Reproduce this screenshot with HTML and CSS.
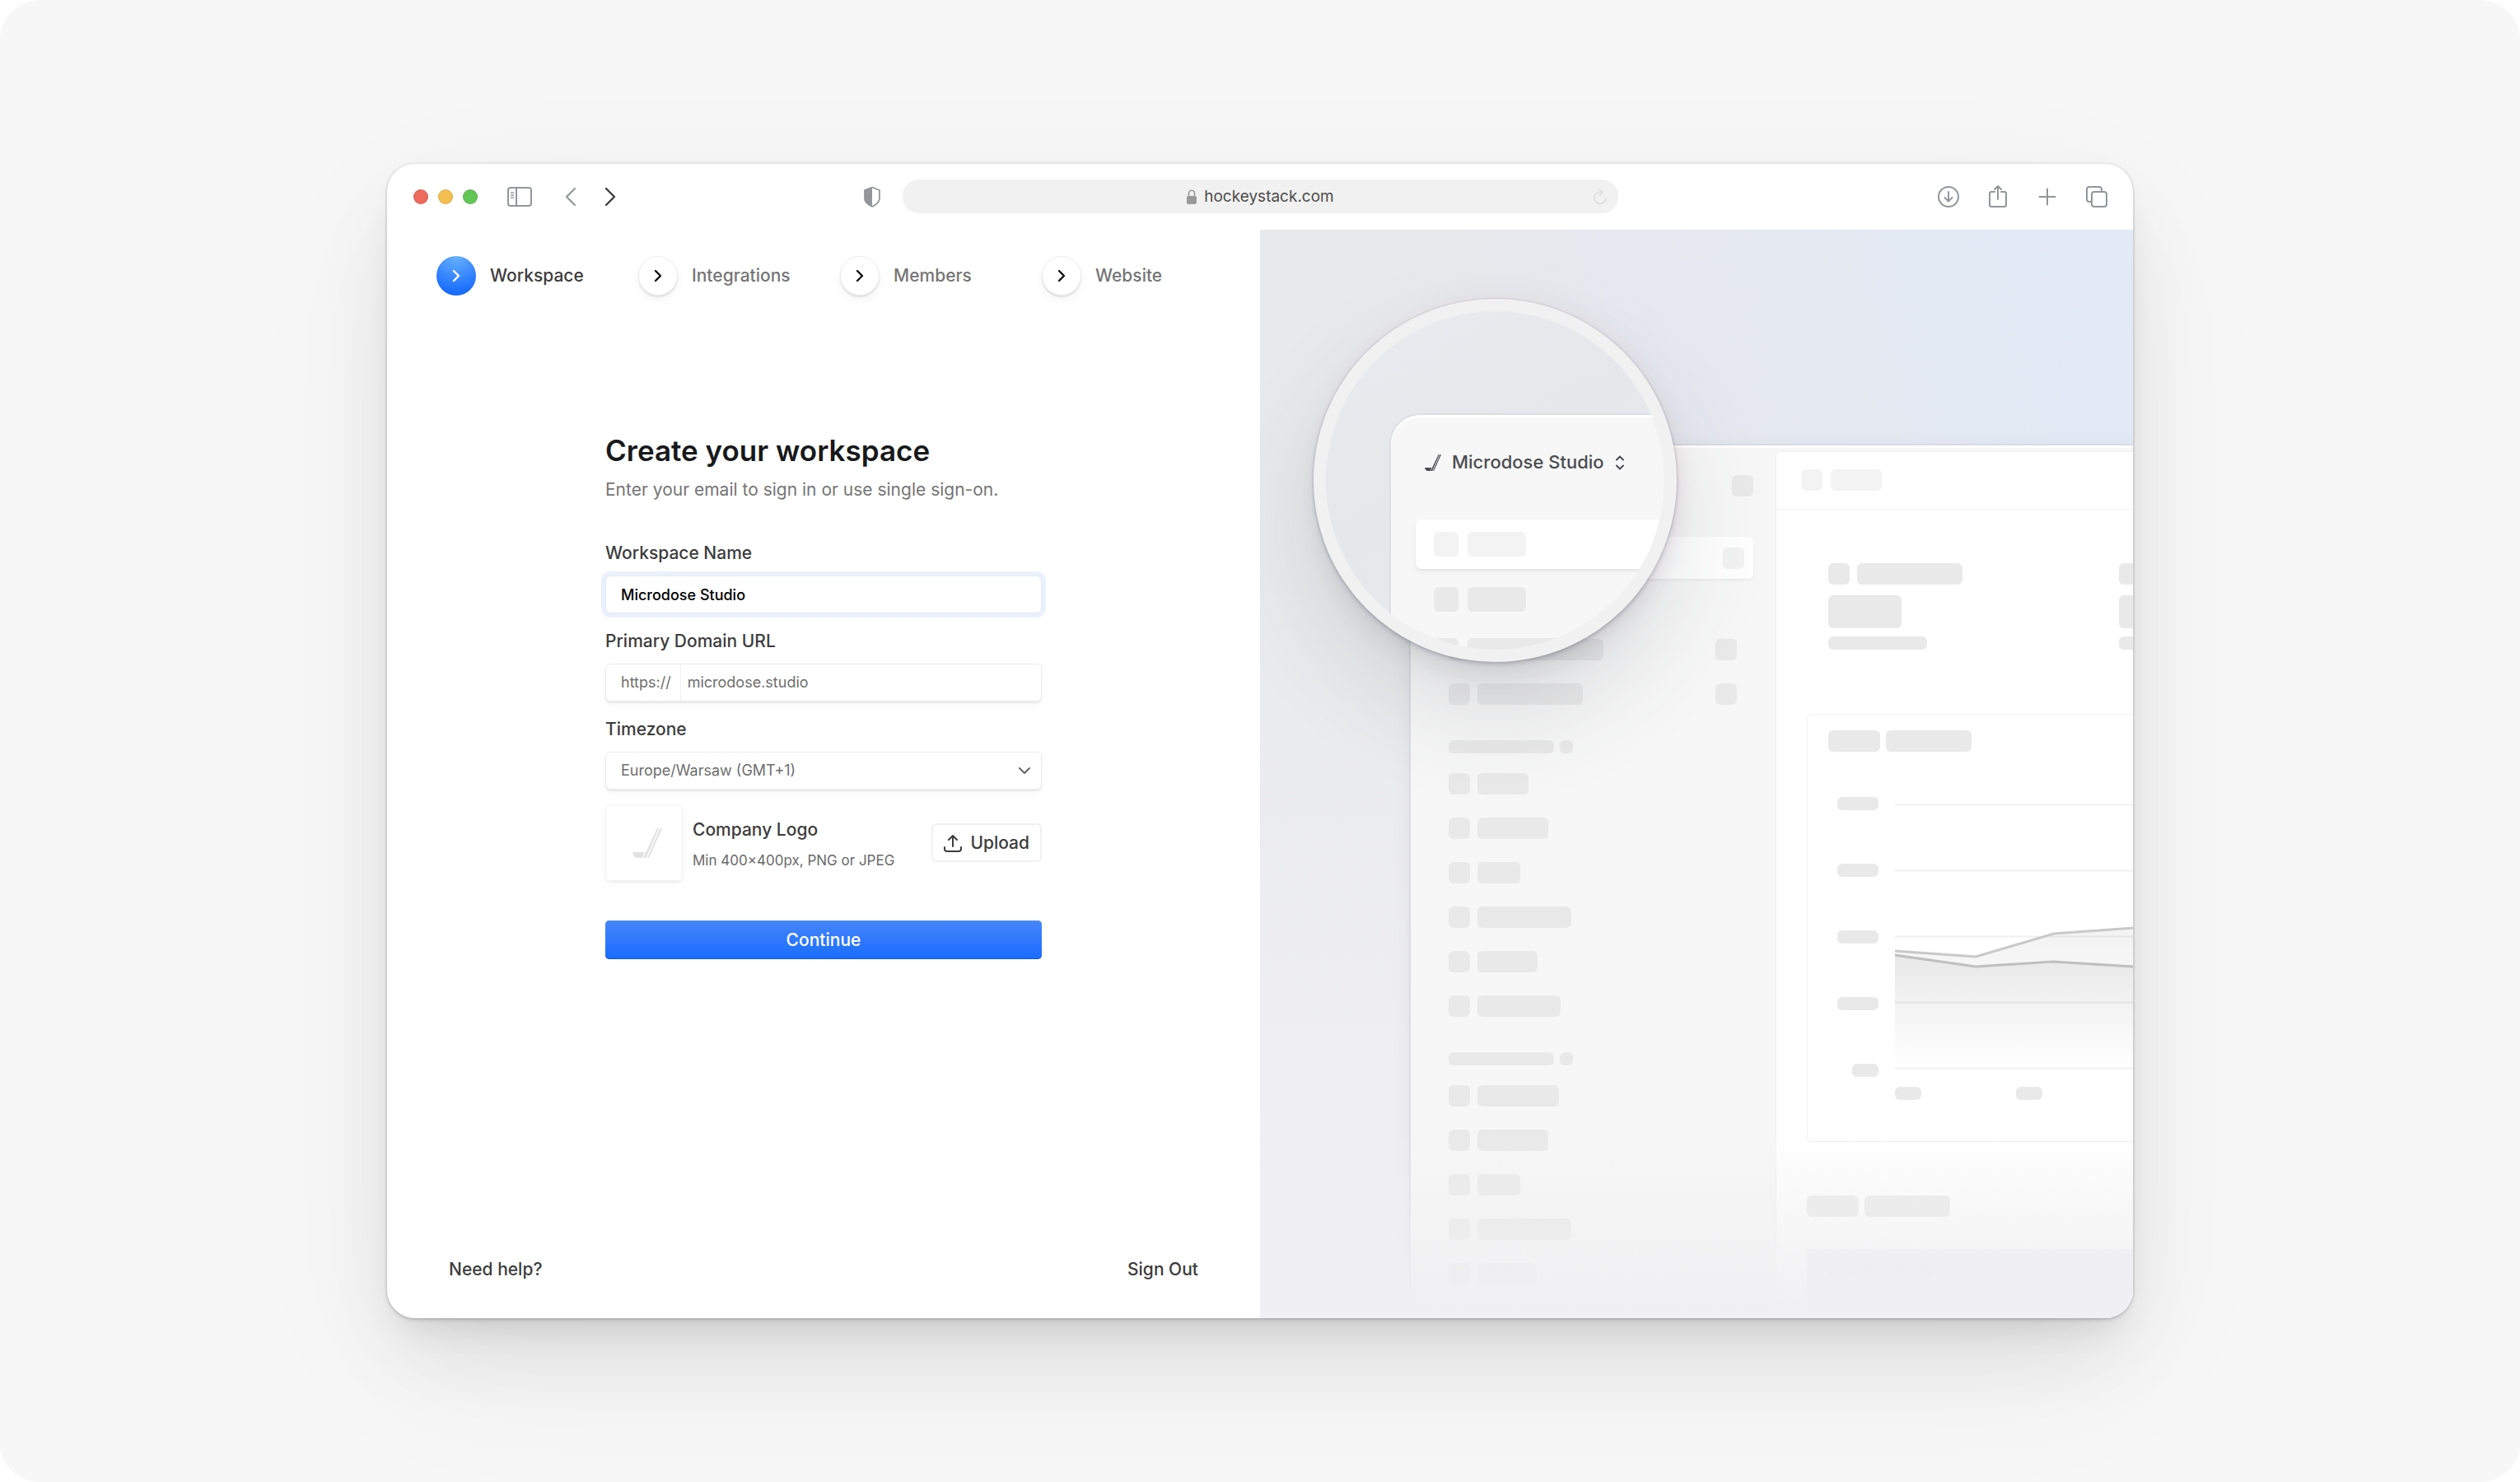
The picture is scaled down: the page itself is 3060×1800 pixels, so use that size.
FILE: index.html
```html
<!DOCTYPE html>
<html lang="en">
<head>
    <meta charset="UTF-8">
    <meta name="viewport" content="width=device-width, initial-scale=1.0">
    <title>Create your workspace</title>
    <link rel="stylesheet" href="styles.css">
</head>
<body>
<svg class="defs" width="0" height="0" aria-hidden="true">
    <symbol id="chevron" viewBox="0 0 10 16"><path d="M2 2l6 6-6 6" fill="none" stroke="currentColor" stroke-width="2.4" stroke-linecap="round" stroke-linejoin="round"/></symbol>
    <symbol id="logo" viewBox="0 0 36 36"><path d="M0 29h15l-3 7H6C3 36 1 33 0 29zM30 0h2L16.500 36H13zM33.500 0H36L20 36H18z" fill="currentColor"/></symbol>
</svg>

<div class="page">
<div class="window">

    <header class="toolbar">
        <div class="toolbar-left">
            <div class="lights">
                <span class="light red"></span>
                <span class="light yellow"></span>
                <span class="light green"></span>
            </div>
            <button class="tool tool-sidebar" aria-label="Sidebar">
                <svg width="30" height="24" viewBox="0 0 30 24" fill="none" stroke="currentColor" stroke-width="2"><rect x="1" y="1" width="28" height="22" rx="3"/><path d="M11 1v22"/><path d="M4 7h4M4 10h4M4 13h4" stroke-width="1.4"/></svg>
            </button>
            <button class="tool" aria-label="Back">
                <svg width="14" height="24" viewBox="0 0 14 24" fill="none" stroke="currentColor" stroke-width="2.2" stroke-linecap="round" stroke-linejoin="round"><path d="M12 2L2 12l10 10"/></svg>
            </button>
            <button class="tool tool-forward" aria-label="Forward">
                <svg width="14" height="24" viewBox="0 0 14 24" fill="none" stroke="currentColor" stroke-width="2.4" stroke-linecap="round" stroke-linejoin="round"><path d="M2 2l10 10L2 22"/></svg>
            </button>
        </div>

        <div class="address">
            <button class="tool tool-shield" aria-label="Privacy">
                <svg width="22" height="26" viewBox="0 0 22 26"><path d="M11 1.500L20 5v10c0 4.500-4 7.500-9 10-5-2.500-9-5.500-9-10V5z" fill="none" stroke="currentColor" stroke-width="1.800" stroke-linejoin="round"/><path d="M11 1.500V25c-5-2.500-9-5.500-9-10V5z" fill="currentColor"/></svg>
            </button>
            <div class="url-bar">
                <svg class="lock" width="14" height="18" viewBox="0 0 14 18"><rect x="1" y="8" width="12" height="10" rx="2" fill="currentColor"/><path d="M3.500 8V5a3.500 3.800 0 0 1 7 0v3" fill="none" stroke="currentColor" stroke-width="1.600"/></svg>
                <span>hockeystack.com</span>
                <svg class="reload" width="16" height="20" viewBox="0 0 16 20" fill="none" stroke="currentColor" stroke-width="1.600" stroke-linecap="round" stroke-linejoin="round"><path d="M9 4.500A7 7 0 1 0 15 11.500M7 1l4 3.600L7.500 8"/></svg>
            </div>
        </div>

        <div class="toolbar-right">
            <button class="tool" aria-label="Downloads">
                <svg width="28" height="28" viewBox="0 0 28 28" fill="none" stroke="currentColor" stroke-width="2" stroke-linecap="round" stroke-linejoin="round"><circle cx="14" cy="14" r="12"/><path d="M14 8v11M9.500 15l4.500 4.500 4.500-4.500"/></svg>
            </button>
            <button class="tool" aria-label="Share">
                <svg width="28" height="28" viewBox="0 0 28 28" fill="none" stroke="currentColor" stroke-width="2" stroke-linecap="round" stroke-linejoin="round"><path d="M10 8H6a2 2 0 0 0-2 2v14a2 2 0 0 0 2 2h16a2 2 0 0 0 2-2V10a2 2 0 0 0-2-2h-4M14 17V1M10 5l4-4 4 4"/></svg>
            </button>
            <button class="tool" aria-label="New tab">
                <svg width="28" height="28" viewBox="0 0 28 28" fill="none" stroke="currentColor" stroke-width="2" stroke-linecap="round"><path d="M14 4.500v19M4.500 14h19"/></svg>
            </button>
            <button class="tool" aria-label="Tabs">
                <svg width="28" height="28" viewBox="0 0 28 28" fill="none" stroke="currentColor" stroke-width="2" stroke-linejoin="round"><rect x="8" y="8" width="18" height="18" rx="3"/><path d="M8 20H5a3 3 0 0 1-3-3V5a3 3 0 0 1 3-3h12a3 3 0 0 1 3 3v3"/></svg>
            </button>
        </div>
    </header>

    <div class="content">
        <main class="setup">
            <nav class="steps">
                <a class="step active" href="#"><span class="step-dot"><svg width="10" height="16"><use href="#chevron"/></svg></span>Workspace</a>
                <a class="step" href="#"><span class="step-dot"><svg width="10" height="16"><use href="#chevron"/></svg></span>Integrations</a>
                <a class="step" href="#"><span class="step-dot"><svg width="10" height="16"><use href="#chevron"/></svg></span>Members</a>
                <a class="step" href="#"><span class="step-dot"><svg width="10" height="16"><use href="#chevron"/></svg></span>Website</a>
            </nav>

            <form class="form">
                <h1>Create your workspace</h1>
                <p class="intro">Enter your email to sign in or use single sign-on.</p>

                <div class="field">
                    <label for="name">Workspace Name</label>
                    <input class="control focused" type="text" id="name" value="Microdose Studio">
                </div>

                <div class="field">
                    <label for="domain">Primary Domain URL</label>
                    <div class="control url-group">
                        <span class="prefix">https://</span>
                        <input type="text" id="domain" value="microdose.studio">
                    </div>
                </div>

                <div class="field field-last">
                    <label for="timezone">Timezone</label>
                    <div class="select-wrap">
                        <select class="control" id="timezone">
                            <option>Europe/Warsaw (GMT+1)</option>
                        </select>
                        <svg class="select-arrow" width="16" height="10" viewBox="0 0 16 10" fill="none" stroke="currentColor" stroke-width="2" stroke-linecap="round" stroke-linejoin="round"><path d="M2 2l6 6 6-6"/></svg>
                    </div>
                </div>

                <div class="logo-row">
                    <div class="logo-box"><svg width="36" height="36"><use href="#logo"/></svg></div>
                    <div class="logo-text">
                        <p class="logo-title">Company Logo</p>
                        <p class="logo-hint">Min 400×400px, PNG or JPEG</p>
                    </div>
                    <button type="button" class="upload">
                        <svg width="22" height="22" viewBox="0 0 22 22" fill="none" stroke="currentColor" stroke-width="2" stroke-linecap="round" stroke-linejoin="round"><path d="M11 15V2M6 7l5-5 5 5M1 16v2a3 3 0 0 0 3 3h14a3 3 0 0 0 3-3v-2"/></svg>
                        Upload
                    </button>
                </div>

                <button type="submit" class="continue">Continue</button>
            </form>

            <footer class="links">
                <a href="#">Need help?</a>
                <a href="#">Sign Out</a>
            </footer>
        </main>

        <aside class="showcase">
            <div class="preview">
                <div class="side">
                    <div class="side-top"><i class="sk sq"></i></div>
                    <div class="side-active"><i class="sk sq light-sk"></i></div>
                    <div class="rows">
                        <div class="row"><i class="sk sq"></i><i class="sk" style="width:62px"></i></div>
                        <div class="row"><i class="sk sq"></i><i class="sk" style="width:153px"></i><i class="sk sq end"></i></div>
                        <div class="row"><i class="sk sq"></i><i class="sk" style="width:128px"></i><i class="sk sq end"></i></div>
                    </div>
                    <div class="row-title"><i class="sk thin" style="width:128px"></i><i class="sk thin" style="width:16px"></i></div>
                    <div class="rows">
                        <div class="row"><i class="sk sq"></i><i class="sk" style="width:62px"></i></div>
                        <div class="row"><i class="sk sq"></i><i class="sk" style="width:86px"></i></div>
                        <div class="row"><i class="sk sq"></i><i class="sk" style="width:52px"></i></div>
                        <div class="row"><i class="sk sq"></i><i class="sk" style="width:114px"></i></div>
                        <div class="row"><i class="sk sq"></i><i class="sk" style="width:73px"></i></div>
                        <div class="row"><i class="sk sq"></i><i class="sk" style="width:101px"></i></div>
                    </div>
                    <div class="row-title"><i class="sk thin" style="width:128px"></i><i class="sk thin" style="width:16px"></i></div>
                    <div class="rows">
                        <div class="row"><i class="sk sq"></i><i class="sk" style="width:99px"></i></div>
                        <div class="row"><i class="sk sq"></i><i class="sk" style="width:86px"></i></div>
                        <div class="row"><i class="sk sq"></i><i class="sk" style="width:52px"></i></div>
                        <div class="row"><i class="sk sq"></i><i class="sk" style="width:114px"></i></div>
                        <div class="row"><i class="sk sq"></i><i class="sk" style="width:72px"></i></div>
                    </div>
                </div>

                <div class="board">
                    <div class="board-top"><i class="sk sq light-sk"></i><i class="sk light-sk" style="width:62px"></i></div>
                    <div class="stats">
                        <div class="stat">
                            <div class="row"><i class="sk sq"></i><i class="sk" style="width:128px"></i></div>
                            <i class="sk big"></i>
                            <i class="sk thin" style="width:120px"></i>
                        </div>
                        <div class="stat">
                            <div class="row"><i class="sk sq"></i><i class="sk" style="width:128px"></i></div>
                            <i class="sk big"></i>
                            <i class="sk thin" style="width:120px"></i>
                        </div>
                    </div>
                    <div class="chart-card">
                        <div class="pair"><i class="sk" style="width:63px"></i><i class="sk" style="width:104px"></i></div>
                        <div class="chart">
                            <div class="y-axis">
                                <i class="sk thin"></i>
                                <i class="sk thin"></i>
                                <i class="sk thin"></i>
                                <i class="sk thin"></i>
                                <i class="sk thin short"></i>
                            </div>
                            <svg width="480" height="340" viewBox="0 0 480 340">
                                <defs>
                                    <linearGradient id="area" x1="0" y1="170" x2="0" y2="330" gradientUnits="userSpaceOnUse">
                                        <stop offset="0" stop-color="#000" stop-opacity=".065"/>
                                        <stop offset=".5" stop-color="#000" stop-opacity=".03"/>
                                        <stop offset="1" stop-color="#000" stop-opacity="0"/>
                                    </linearGradient>
                                </defs>
                                <path d="M0 9.500h480M0 89.500h480M0 169.500h480M0 249.500h480M0 329.500h480" stroke="#f0f0f0" stroke-width="2"/>
                                <path d="M0 187l98 7 95-28 97-7 190-12v180H0z" fill="url(#area)" opacity=".7"/>
                                <path d="M0 192l98 14 94-6 98 6 190 8v116H0z" fill="url(#area)"/>
                                <path d="M0 187l98 7 95-28 97-7 190-12" fill="none" stroke="#c9c9ca" stroke-width="3"/>
                                <path d="M0 192l98 14 94-6 98 6 190 8" fill="none" stroke="#bfbfbf" stroke-width="3"/>
                            </svg>
                        </div>
                        <div class="x-axis"><i class="sk thin short"></i><i class="sk thin short"></i></div>
                    </div>
                    <div class="pair board-title"><i class="sk" style="width:63px"></i><i class="sk" style="width:104px"></i></div>
                    <div class="table-card"><i class="sk thin" style="width:128px"></i></div>
                </div>
            </div>
            <div class="fade"></div>

            <div class="lens">
                <div class="lens-view">
                    <div class="lens-window">
                        <div class="lens-title">
                            <svg width="20" height="20"><use href="#logo"/></svg>
                            <span>Microdose Studio</span>
                            <svg width="12" height="18" viewBox="0 0 12 18" fill="none" stroke="currentColor" stroke-width="2" stroke-linecap="round" stroke-linejoin="round"><path d="M2 5.500l4-4 4 4M2 12.500l4 4 4-4"/></svg>
                        </div>
                        <div class="lens-row lens-active"><i class="sk light-sk"></i><i class="sk light-sk"></i></div>
                        <div class="lens-row"><i class="sk"></i><i class="sk"></i></div>
                        <div class="lens-row"><i class="sk"></i><i class="sk wide"></i></div>
                    </div>
                </div>
            </div>
        </aside>
    </div>

</div>
</div>
</body>
</html>
```
FILE: styles.css
```css
* {
    box-sizing: border-box;
}

body {
    margin: 0;
    background: #fff;
    font-family: Inter, "Liberation Sans", sans-serif;
    font-size: 21px;
    line-height: 26px;
    font-weight: 450;
    color: #3c3c3c;
}

h1, p {
    margin: 0;
}

a {
    color: inherit;
    text-decoration: none;
}

svg {
    display: block;
}

button, input, select {
    font: inherit;
    color: inherit;
}

.defs {
    position: absolute;
}

.page {
    display: flex;
    min-height: 100vh;
    padding: 199px 60px;
    background: #f7f7f7;
    border-radius: 48px;
}

.window {
    display: flex;
    flex-direction: column;
    width: 100%;
    max-width: 2120px;
    margin: 0 auto;
    background: #fff;
    border-radius: 34px;
    box-shadow:
        0 0 0 2px rgba(0, 0, 0, 0.035),
        0 2px 4px rgba(0, 0, 0, 0.16),
        0 24px 40px -16px rgba(0, 0, 0, 0.1),
        0 50px 100px -10px rgba(0, 0, 0, 0.08),
        0 60px 200px rgba(0, 0, 0, 0.05);
}

/* TOOLBAR */
.toolbar {
    display: grid;
    grid-template-columns: 1fr auto 1fr;
    align-items: center;
    height: 80px;
    padding: 0 30px 1px;
    color: #929699;
}

.toolbar-left, .toolbar-right, .lights, .address {
    display: flex;
    align-items: center;
}

.lights {
    gap: 12px;
    margin: 0 36px 0 2px;
}

.light {
    width: 18px;
    height: 18px;
    border-radius: 50%;
    border: 1px solid rgba(0, 0, 0, 0.1);
}

.red { background: #ed6a5f; }
.yellow { background: #f5bf4f; }
.green { background: #62c655; }

.tool {
    padding: 0;
    border: none;
    background: none;
    cursor: pointer;
}

.tool-sidebar {
    margin-right: 40px;
}

.tool-forward {
    margin-left: 34px;
    color: #3b3d40;
}

.tool-shield {
    margin: 0 26px 0 -48px;
}

.url-bar {
    position: relative;
    display: flex;
    align-items: center;
    justify-content: center;
    gap: 8px;
    width: 869px;
    height: 41px;
    border-radius: 20px;
    background: #f1f1f1;
    font-size: 19px;
    font-weight: 400;
    color: #4c4c4c;
}

.lock {
    color: #999;
}

.reload {
    position: absolute;
    right: 14px;
    color: #dcdcdc;
}

.toolbar-right {
    justify-content: flex-end;
    gap: 32px;
}

.content {
    flex: 1;
    display: grid;
    grid-template-columns: 1fr 1fr;
}

/* LEFT SIDE */
.setup {
    display: flex;
    flex-direction: column;
}

.steps {
    display: grid;
    grid-template-columns: repeat(4, 1fr);
    padding: 32px 20px 0 60px;
}

.step {
    display: flex;
    align-items: center;
    gap: 17px;
    color: #757575;
}

.step.active {
    color: #3c3c3c;
}

.step-dot {
    display: grid;
    place-items: center;
    width: 48px;
    height: 48px;
    border-radius: 50%;
    background: #fff;
    border: 1px solid #ededed;
    box-shadow: 0 2px 2px rgba(20, 20, 40, 0.1), 0 6px 12px rgba(20, 20, 40, 0.04);
    color: #111;
}

.step.active .step-dot {
    border: none;
    background: radial-gradient(circle at 50% 0, #67b2fd 0, #3d8cfd 45%, #176bfd 85%);
    box-shadow: none;
    color: #fff;
}

.form {
    width: 530px;
    margin: 166px auto 0;
}

h1 {
    font-size: 35px;
    line-height: 44px;
    font-weight: 600;
    color: #18191b;
}

.intro {
    margin: 13px 0 51px;
    font-weight: 400;
    color: #757575;
}

.field {
    display: flex;
    flex-direction: column;
    gap: 14px;
    margin-bottom: 21px;
}

.field-last {
    margin-bottom: 18px;
}

.control {
    width: 100%;
    height: 46px;
    padding: 0 18px;
    border: 1px solid #ececec;
    border-radius: 6px;
    outline: none;
    background: #fff;
    box-shadow: 0 2px 2px rgba(0, 0, 0, 0.07), 0 4px 8px rgba(0, 0, 0, 0.03);
    font-size: 18px;
    font-weight: 400;
    color: #6e6e6e;
}

.focused {
    font-weight: 500;
    color: #000;
    border-color: #e4e7ef;
    box-shadow: 0 0 0 5px #eaf1fe;
}

.url-group {
    display: flex;
}

.prefix {
    display: flex;
    align-items: center;
    padding-right: 11px;
    border-right: 1px solid #f0f0f0;
}

.url-group input {
    flex: 1;
    padding: 0 8px;
    border: none;
    outline: none;
    background: none;
}

.select-wrap {
    position: relative;
}

select.control {
    display: block;
    appearance: none;
}

.select-arrow {
    position: absolute;
    right: 13px;
    top: 18px;
    pointer-events: none;
    color: #666;
}

.logo-row {
    display: flex;
    align-items: center;
    gap: 12px;
    margin-bottom: 48px;
}

.logo-box {
    display: grid;
    place-items: center;
    width: 94px;
    height: 93px;
    padding-left: 8px;
    border: 1px solid #f3f3f3;
    border-radius: 6px;
    box-shadow: 0 2px 3px rgba(0, 0, 0, 0.05), 0 6px 12px rgba(0, 0, 0, 0.02);
    color: #e2e2e2;
}

.logo-text {
    flex: 1;
    display: flex;
    flex-direction: column;
    gap: 13px;
    padding-top: 4px;
}

.logo-hint {
    font-size: 17px;
    line-height: 22px;
    font-weight: 400;
    color: #6a6a6a;
}

.upload {
    display: flex;
    align-items: center;
    gap: 10px;
    height: 47px;
    padding: 0 13px;
    border: 2px solid #f0f0f0;
    border-radius: 6px;
    background: #fff;
    cursor: pointer;
}

.continue {
    display: block;
    width: 100%;
    height: 47px;
    border: none;
    border-radius: 5px;
    background: linear-gradient(#4685fa, #186dfe);
    box-shadow: inset 0 1px 0 #4a93f0, inset 0 -1px 0 #1a58d8;
    color: #fff;
    cursor: pointer;
}

.links {
    display: flex;
    justify-content: space-between;
    margin-top: auto;
    padding: 0 75px 46px;
}

/* RIGHT SIDE */
.showcase {
    position: relative;
    overflow: hidden;
    border-radius: 0 0 34px 0;
    background:
        linear-gradient(rgba(240, 240, 242, 0) 20%, #f0f0f2 90%),
        linear-gradient(75deg, #e8e9ec 35%, #e4e8f1 70%, #e2eaf5 95%);
    padding: 262px 0 0 183px;
}

.preview {
    display: flex;
    width: 1400px;
    border-radius: 26px 0 0 0;
    background: #f7f7f7;
    box-shadow: 0 0 0 2px rgba(60, 70, 90, 0.06), inset 0 3px 0 #fff, 0 6px 24px rgba(60, 70, 90, 0.08);
}

.sk {
    flex: none;
    display: block;
    height: 26px;
    border-radius: 6px;
    background: #e9e9e9;
}

.sq {
    width: 26px;
}

.thin {
    height: 16px;
}

.light-sk {
    background: #f3f3f3;
}

.side {
    width: 443px;
    padding: 36px 27px 0 24px;
}

.side-top {
    display: flex;
    justify-content: flex-end;
    margin-bottom: 49px;
}

.side-active {
    display: flex;
    align-items: center;
    justify-content: flex-end;
    height: 51px;
    margin-bottom: 19px;
    padding: 0 11px;
    border-radius: 6px;
    background: #fff;
    box-shadow: 0 2px 3px rgba(0, 0, 0, 0.05);
}

.rows {
    display: flex;
    flex-direction: column;
    gap: 28px;
    padding: 0 20px 0 22px;
}

.row {
    display: flex;
    gap: 9px;
}

.end {
    margin-left: auto;
}

.row-title {
    display: flex;
    gap: 7px;
    margin: 43px 22px 24px;
}

.board {
    flex: 1;
    margin-top: 7px;
    border: 1px solid #f1f1f1;
    border-radius: 6px 0 0 0;
    background: #fff;
}

.board-top {
    display: flex;
    gap: 10px;
    padding: 21px 30px 22px;
    border-bottom: 1px solid #f0f0f0;
}

.stats {
    display: grid;
    grid-template-columns: 353px 353px;
    padding: 65px 63px 78px;
}

.stat {
    display: flex;
    flex-direction: column;
    gap: 10px;
}

.stat .row {
    margin-bottom: 3px;
}

.big {
    width: 89px;
    height: 40px;
}

.chart-card {
    margin-left: 37px;
    height: 520px;
    padding: 19px 25px;
    border: 1px solid #f1f1f1;
    border-radius: 6px;
}

.pair {
    display: flex;
    gap: 7px;
}

.chart {
    display: flex;
    gap: 20px;
    margin-top: 55px;
    padding-left: 11px;
}

.y-axis {
    display: flex;
    flex-direction: column;
    align-items: flex-end;
    gap: 65px;
}

.y-axis .sk {
    width: 50px;
}

.y-axis .short, .short {
    width: 32px;
}

.x-axis {
    display: flex;
    gap: 115px;
    margin-top: 12px;
    padding-left: 81px;
}

.board-title {
    margin: 65px 37px 39px;
}

.table-card {
    margin-left: 37px;
    height: 80px;
    padding: 18px 26px;
    background: #f0f0f2;
}

/* bottom fade over the preview */
.fade {
    position: absolute;
    left: 0;
    right: 0;
    bottom: 0;
    height: 230px;
    background: linear-gradient(rgba(240, 240, 242, 0), #f0f0f2 96%);
}

/* MAGNIFIER */
.lens {
    position: absolute;
    left: 65px;
    top: 84px;
    width: 441px;
    height: 441px;
    padding: 15px;
    border-radius: 50%;
    background: #f1f1f1;
    box-shadow:
        0 0 0 2px rgba(60, 50, 50, 0.05),
        0 3px 5px rgba(40, 50, 70, 0.18),
        0 20px 30px -8px rgba(50, 55, 75, 0.12),
        0 60px 120px rgba(60, 65, 80, 0.15),
        6px -4px 20px rgba(230, 180, 190, 0.12);
}

.lens-view {
    height: 100%;
    padding: 126px 0 0 79px;
    border-radius: 50%;
    overflow: hidden;
    background: linear-gradient(150deg, #e9ebf0, #e6e7eb 45%, #e9ebf0);
}

.lens-window {
    width: 440px;
    height: 400px;
    padding: 41px 30px;
    border-radius: 36px 0 0 0;
    background: #f7f7f7;
    box-shadow: inset 0 3px 0 #fff, 0 0 0 2px rgba(60, 70, 90, 0.06);
}

.lens-title {
    display: flex;
    align-items: center;
    gap: 13px;
    margin: 0 0 53px 11px;
    font-size: 22px;
    line-height: 33px;
    font-weight: 500;
    color: #4b4c4f;
}

.lens-row {
    display: flex;
    gap: 11px;
    margin-bottom: 32px;
    padding-left: 22px;
}

.lens-row .sk {
    width: 30px;
    height: 30px;
}

.lens-row .sk + .sk {
    width: 71px;
}

.lens-row .sk.wide {
    width: 180px;
}

.lens-active {
    align-items: center;
    height: 60px;
    margin-bottom: 22px;
    border-radius: 7px;
    background: #fff;
    box-shadow: 0 2px 3px rgba(0, 0, 0, 0.06), 0 4px 8px rgba(0, 0, 0, 0.03);
}
```
